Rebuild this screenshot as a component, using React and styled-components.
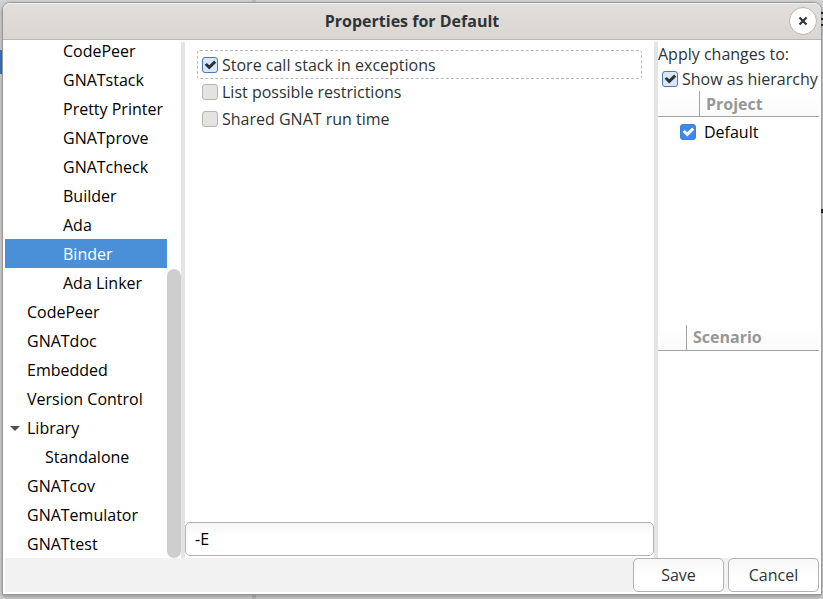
import React, { useState } from "react";
import styled, { createGlobalStyle } from "styled-components";

const GlobalStyle = createGlobalStyle`
  *, *::before, *::after { box-sizing: border-box; }
  body {
    margin: 0;
    background: #d4d3d3;
    font-family: "Open Sans", "Noto Sans", sans-serif;
    font-size: 16px;
    line-height: 20px;
    color: #2e3436;
  }
  button, input { font: inherit; color: inherit; }
`;

const Desktop = styled.div`
  position: relative;
  display: flex;
  min-height: 100vh;
  padding: 2px 1px 4px 2px;
  overflow: hidden;
`;

const BackSelection = styled.div`
  position: absolute;
  left: 0;
  top: 50px;
  width: 3px;
  height: 24px;
  background: #3f76b8;
`;

const BackDivider = styled.div`
  position: absolute;
  left: 252px;
  top: 0;
  bottom: 0;
  width: 4px;
  background: #bcbcbc;
`;

const BackMarks = styled.svg`
  position: absolute;
  right: 0;
  top: 0;
  z-index: 1;
`;

const Window = styled.section`
  position: relative;
  flex: 1;
  min-width: 0;
  display: flex;
  flex-direction: column;
  background: #fff;
  border: 1px solid #999896;
  border-radius: 8px 8px 0 0;
  box-shadow: 0 2px 5px rgba(0, 0, 0, 0.3);
`;

const TitleBar = styled.header`
  display: grid;
  grid-template-columns: 1fr auto 1fr;
  align-items: center;
  height: 37px;
  padding: 0 4px;
  background: linear-gradient(#e1dedb, #dad6d2);
  border-bottom: 1px solid #bab7b2;
  border-radius: 7px 7px 0 0;
  box-shadow: inset 0 1px #f3f1f0;
`;

const Title = styled.h1`
  grid-column: 2;
  margin: 0;
  font-size: 16px;
  font-weight: 700;
`;

const CloseButton = styled.button`
  justify-self: end;
  display: grid;
  place-items: center;
  width: 28px;
  height: 28px;
  padding: 0;
  background: #fff;
  border: 1px solid #b9b4af;
  border-radius: 50%;
`;

const Content = styled.div`
  flex: 1;
  display: flex;
  flex-direction: column;
  padding: 2px;
`;

const Panes = styled.div`
  flex: 1;
  display: grid;
  grid-template-columns: 176px 4px minmax(0, 1fr) 4px 161px;
`;

const Handle = styled.div`
  background: #e4e4e4;
`;

const TreePane = styled.nav`
  display: flex;
  min-height: 0;
`;

const TreeList = styled.ul`
  flex: 1;
  height: calc(100vh - 83px);
  display: flex;
  flex-direction: column;
  justify-content: flex-end;
  margin: 0;
  padding: 0;
  list-style: none;
  overflow: hidden;
`;

const TreeButton = styled.button`
  display: flex;
  align-items: center;
  width: 100%;
  height: 29px;
  padding: 0 0 0 ${(p) => [4, 22, 40][p.$depth]}px;
  border: 0;
  background: ${(p) => (p.$selected ? "#4a90d9" : "transparent")};
  color: ${(p) => (p.$selected ? "#fff" : "#000")};
  line-height: 16px;
  text-align: left;
  white-space: nowrap;
`;

const Expander = styled.span`
  display: flex;
  width: 18px;
`;

const ScrollTrack = styled.div`
  display: flex;
  flex-direction: column;
  justify-content: flex-end;
  width: 14px;
`;

const ScrollThumb = styled.div`
  height: 56%;
  background: #cecece;
  border-radius: 7px;
`;

const MainPane = styled.main`
  display: flex;
  flex-direction: column;
  padding-bottom: 2px;
`;

const Switches = styled.div`
  flex: 1;
  padding: 8px 12px;
`;

const OptionLabel = styled.label`
  display: flex;
  align-items: center;
  gap: 4px;
  height: ${(p) => (p.$framed ? 29 : 27)}px;
  padding: 0 0 ${(p) => (p.$framed ? 0 : 2)}px 4px;
  border: ${(p) => (p.$framed ? "1px dashed #b9b9b7" : "0 solid transparent")};
  border-left-width: 1px;
  border-radius: 3px;
  white-space: nowrap;
`;

const HierarchyLabel = styled.label`
  display: flex;
  align-items: center;
  gap: 4px;
  height: 25px;
  padding-left: 4px;
  white-space: nowrap;
`;

const CheckBox = styled.span`
  position: relative;
  flex: none;
  display: block;
  width: 16px;
  height: 16px;
`;

const CheckInput = styled.input`
  appearance: none;
  display: block;
  width: 16px;
  height: 16px;
  margin: 0;
  border: 1px solid #b9b6b2;
  border-radius: 3px;
  background: #e4e3e2;
  &:checked {
    border-color: ${(p) => (p.$accent ? "#3a80e0" : "#4a78b8")};
    background: ${(p) => (p.$accent ? "#3f87e8" : "#dbe7f7")};
  }
`;

const CheckMark = styled.svg`
  position: absolute;
  inset: 0;
  pointer-events: none;
`;

const CommandLine = styled.input`
  width: 100%;
  height: 34px;
  padding: 0 9px;
  border: 1px solid #b4b2af;
  border-radius: 5px;
  background: linear-gradient(#f5f5f5, #fff 12px);
  color: #000;
`;

const SidePane = styled.aside`
  display: flex;
  flex-direction: column;
`;

const SideCaption = styled.p`
  margin: 0;
  height: 24px;
  line-height: 24px;
  white-space: nowrap;
`;

const TableArea = styled.div`
  flex: 1;
`;

const Table = styled.table`
  width: 100%;
  table-layout: fixed;
  border-collapse: separate;
  border-spacing: 0;
`;

const HeadCell = styled.th`
  height: 26px;
  width: ${(p) => (p.$width ? p.$width + "px" : "auto")};
  padding: 0 6px;
  border-bottom: 1px solid #a3a3a1;
  border-right: ${(p) => (p.$width ? "1px solid #a3a3a1" : "0")};
  background: linear-gradient(#fff, #fafafa);
  color: #969896;
  font-weight: 700;
  text-align: left;
`;

const Cell = styled.td`
  height: 29px;
  padding: 0 0 0 ${(p) => (p.$tick ? 22 : 4)}px;
  color: #000;
`;

const Actions = styled.footer`
  display: flex;
  justify-content: flex-end;
  gap: 4px;
  background: #f2f2f2;
`;

const ActionButton = styled.button`
  width: 91px;
  height: 34px;
  padding: 0;
  border: 1px solid #b4b2af;
  border-radius: 5px;
  background: linear-gradient(#f8f8f8, #fff 60%);
`;

function Check({ accent, ...rest }) {
  const [checked, setChecked] = useState(Boolean(rest.defaultChecked));
  return (
    <CheckBox>
      <CheckInput
        type="checkbox"
        $accent={accent}
        {...rest}
        onChange={(e) => setChecked(e.target.checked)}
      />
      {checked && (
        <CheckMark width="16" height="16" viewBox="0 0 16 16" aria-hidden="true">
          <path
            d="M2.6 7.8 4.8 6l2.4 2.2 5-4.8 2 2.4-7 6.6Z"
            fill={accent ? "#fff" : "#2e3436"}
          />
        </CheckMark>
      )}
    </CheckBox>
  );
}

const NODES = [
  { name: "CodePeer", depth: 2 },
  { name: "GNATstack", depth: 2 },
  { name: "Pretty Printer", depth: 2 },
  { name: "GNATprove", depth: 2 },
  { name: "GNATcheck", depth: 2 },
  { name: "Builder", depth: 2 },
  { name: "Ada", depth: 2 },
  { name: "Binder", depth: 2 },
  { name: "Ada Linker", depth: 2 },
  { name: "CodePeer", depth: 0 },
  { name: "GNATdoc", depth: 0 },
  { name: "Embedded", depth: 0 },
  { name: "Version Control", depth: 0 },
  { name: "Library", depth: 0, open: true },
  { name: "Standalone", depth: 1 },
  { name: "GNATcov", depth: 0 },
  { name: "GNATemulator", depth: 0 },
  { name: "GNATtest", depth: 0 },
];

const SWITCHES = [
  { name: "Store call stack in exceptions", on: true, framed: true },
  { name: "List possible restrictions" },
  { name: "Shared GNAT run time" },
];

export default function App() {
  const [selected, setSelected] = useState(7);
  return (
    <Desktop>
      <GlobalStyle />
      <BackSelection />
      <BackDivider />
      <Window aria-labelledby="dialog-title">
        <TitleBar>
          <Title id="dialog-title">Properties for Default</Title>
          <CloseButton type="button" aria-label="Close">
            <svg width="10" height="10" viewBox="0 0 10 10" aria-hidden="true">
              <path d="M1.5 1.5l7 7M8.5 1.5l-7 7" stroke="#2e3436" strokeWidth="2.2" />
            </svg>
          </CloseButton>
        </TitleBar>
        <Content>
          <Panes>
            <TreePane aria-label="Property pages">
              <TreeList>
                {NODES.map((node, i) => (
                  <li key={i}>
                    <TreeButton
                      type="button"
                      $depth={node.depth}
                      $selected={i === selected}
                      onClick={() => setSelected(i)}
                    >
                      <Expander>
                        {node.open && (
                          <svg width="12" height="8" viewBox="0 0 12 8" aria-hidden="true">
                            <path d="M1 2h10L6 7Z" fill="#4c5052" />
                          </svg>
                        )}
                      </Expander>
                      {node.name}
                    </TreeButton>
                  </li>
                ))}
              </TreeList>
              <ScrollTrack>
                <ScrollThumb />
              </ScrollTrack>
            </TreePane>
            <Handle />
            <MainPane>
              <Switches>
                {SWITCHES.map((s) => (
                  <OptionLabel key={s.name} $framed={s.framed}>
                    <Check defaultChecked={s.on} />
                    {s.name}
                  </OptionLabel>
                ))}
              </Switches>
              <CommandLine aria-label="Switches" defaultValue="-E" />
            </MainPane>
            <Handle />
            <SidePane>
              <SideCaption>Apply changes to:</SideCaption>
              <HierarchyLabel>
                <Check defaultChecked />
                Show as hierarchy
              </HierarchyLabel>
              <TableArea>
                <Table>
                  <thead>
                    <tr>
                      <HeadCell $width={42} />
                      <HeadCell scope="col">Project</HeadCell>
                    </tr>
                  </thead>
                  <tbody>
                    <tr>
                      <Cell $tick>
                        <Check accent defaultChecked aria-labelledby="project-default" />
                      </Cell>
                      <Cell id="project-default">Default</Cell>
                    </tr>
                  </tbody>
                </Table>
              </TableArea>
              <TableArea>
                <Table>
                  <thead>
                    <tr>
                      <HeadCell $width={29} />
                      <HeadCell scope="col">Scenario</HeadCell>
                    </tr>
                  </thead>
                </Table>
              </TableArea>
            </SidePane>
          </Panes>
          <Actions>
            <ActionButton type="button">Save</ActionButton>
            <ActionButton type="button">Cancel</ActionButton>
          </Actions>
        </Content>
      </Window>
      <BackMarks width="2" height="220" viewBox="0 0 2 220" aria-hidden="true">
        <path d="M0 12h2v2H0zM0 18h2v2H0zM0 24h2v2H0zM0 209h2v4H0z" fill="#222" />
      </BackMarks>
    </Desktop>
  );
}
